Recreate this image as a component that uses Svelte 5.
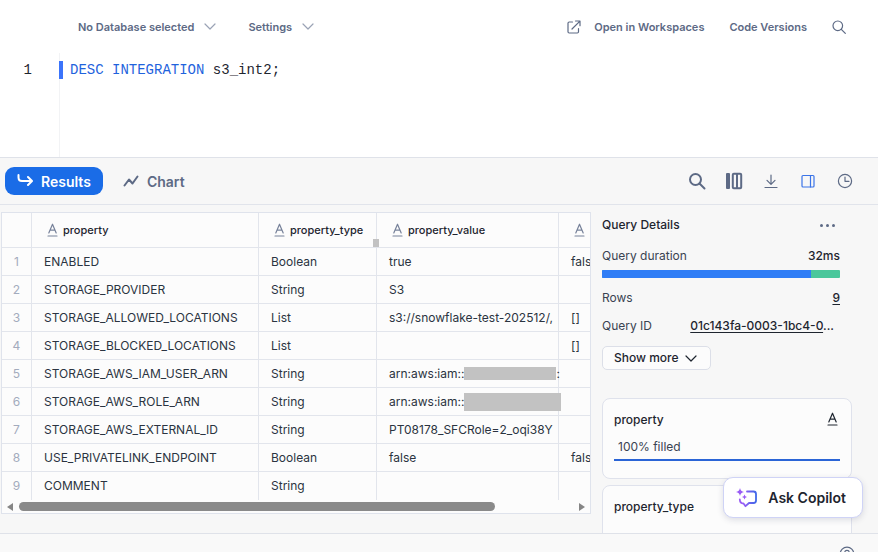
<script lang="ts">
  type Row = { property: string; type: string; value: string; fallback: string; mask?: string; tail?: string };

  const columns = ["property", "property_type", "property_value", ""];

  const rows: Row[] = [
    { property: "ENABLED", type: "Boolean", value: "true", fallback: "false" },
    { property: "STORAGE_PROVIDER", type: "String", value: "S3", fallback: "" },
    { property: "STORAGE_ALLOWED_LOCATIONS", type: "List", value: "s3://snowflake-test-202512/,", fallback: "[]" },
    { property: "STORAGE_BLOCKED_LOCATIONS", type: "List", value: "", fallback: "[]" },
    { property: "STORAGE_AWS_IAM_USER_ARN", type: "String", value: "arn:aws:iam::", fallback: "", mask: "short", tail: ":" },
    { property: "STORAGE_AWS_ROLE_ARN", type: "String", value: "arn:aws:iam::", fallback: "", mask: "tall" },
    { property: "STORAGE_AWS_EXTERNAL_ID", type: "String", value: "PT08178_SFCRole=2_oqi38Y", fallback: "" },
    { property: "USE_PRIVATELINK_ENDPOINT", type: "Boolean", value: "false", fallback: "false" },
    { property: "COMMENT", type: "String", value: "", fallback: "" },
  ];

  const compileShare = 88;

  let tab = $state("results");
</script>

{#snippet chevron()}
  <svg class="chevron" width="12" height="7" viewBox="0 0 12 7" aria-hidden="true">
    <path d="M1 1l5 5 5-5" />
  </svg>
{/snippet}

{#snippet textType()}
  <svg class="text-type" width="11" height="14" viewBox="0 0 11 14" aria-hidden="true">
    <path d="M1.8 10L5.5 1.2 9.2 10M3 7.2h5M1 13h9" />
  </svg>
{/snippet}

<div class="app">
  <header class="toolbar">
    <button class="menu" type="button">No Database selected {@render chevron()}</button>
    <button class="menu" type="button">Settings {@render chevron()}</button>
    <div class="actions">
      <button class="open" type="button">
        <svg class="icon" width="14" height="14" viewBox="0 0 14 14" aria-hidden="true">
          <path d="M5.5 2H2.2Q1 2 1 3.2v8.6Q1 13 2.2 13h8.1q1.2 0 1.2-1.2V8.5M5 9l7.7-7.7M8.5 1H13v4.7" />
        </svg>
        Open in Workspaces
      </button>
      <button type="button">Code Versions</button>
      <button class="find" type="button" aria-label="Search worksheet">
        <svg class="icon" width="14" height="14" viewBox="0 0 14 14" aria-hidden="true">
          <circle cx="5.8" cy="5.8" r="4.8" />
          <path d="M9.3 9.3L13.3 13.3" />
        </svg>
      </button>
    </div>
  </header>

  <section class="editor">
    <span class="line-no">1</span>
    <div class="code">
      <pre><span class="kw">DESC INTEGRATION</span> s3_int2;</pre>
    </div>
  </section>

  <nav class="tabs">
    <button class="tab" class:active={tab === "results"} type="button" onclick={() => (tab = "results")}>
      <svg class="tab-icon" width="16" height="14" viewBox="0 0 16 14" aria-hidden="true">
        <path d="M1.5 1v2.500Q1.500 7 5 7h9.500M11 3l4 4-4 4" />
      </svg>
      Results
    </button>
    <button class="tab" class:active={tab === "chart"} type="button" onclick={() => (tab = "chart")}>
      <svg class="tab-icon" width="16" height="14" viewBox="0 0 16 14" aria-hidden="true">
        <path d="M1.5 11.5l4.5-6 3.5 4 5-7" />
      </svg>
      Chart
    </button>
    <div class="tools">
      <button type="button" aria-label="Search results">
        <svg class="bold" width="18" height="18" viewBox="0 0 18 18" aria-hidden="true">
          <circle cx="7.5" cy="7.5" r="5.5" />
          <path d="M11.5 11.5l5 5" />
        </svg>
      </button>
      <button type="button" aria-label="Columns">
        <svg class="bold" width="18" height="18" viewBox="0 0 18 18" aria-hidden="true">
          <rect class="solid" x="1" y="1" width="4" height="16" rx="1" />
          <rect x="7.8" y="1.8" width="8.4" height="14.4" rx="1" />
          <path d="M12 2v14" />
        </svg>
      </button>
      <button type="button" aria-label="Download">
        <svg class="icon" width="18" height="18" viewBox="0 0 18 18" aria-hidden="true">
          <path d="M9 3v9M5 8.3l4 4 4-4M3 15.5h12" />
        </svg>
      </button>
      <button class="on" type="button" aria-label="Toggle details">
        <svg class="icon" width="18" height="18" viewBox="0 0 18 18" aria-hidden="true">
          <rect x="3" y="3.5" width="12" height="11.5" rx="1" />
          <path d="M11.5 3.5V15" />
        </svg>
      </button>
      <button type="button" aria-label="Query history">
        <svg class="icon" width="18" height="18" viewBox="0 0 18 18" aria-hidden="true">
          <circle cx="9" cy="9" r="6.6" />
          <path d="M9 5v4.3h4" />
        </svg>
      </button>
    </div>
  </nav>

  <main>
    <div class="grid">
      <table>
        <thead>
          <tr>
            <th class="num"></th>
            {#each columns as name, i (i)}
              <th class="c{i}">
                <span class="head">{@render textType()}{name}</span>
                {#if i === 1}<i class="resizer"></i>{/if}
              </th>
            {/each}
          </tr>
        </thead>
        <tbody>
          {#each rows as row, i (row.property)}
            <tr>
              <td class="num">{i + 1}</td>
              <td>{row.property}</td>
              <td>{row.type}</td>
              <td class:spill={row.mask}>
                {#if row.mask}
                  <span class="masked">{row.value}<i class="mask {row.mask}"></i>{row.tail ?? ""}</span>
                {:else}
                  {row.value}
                {/if}
              </td>
              <td>{row.fallback}</td>
            </tr>
          {/each}
        </tbody>
      </table>
      <div class="scrollbar" aria-hidden="true">
        <i class="arrow left"></i>
        <div class="track"><div class="thumb"></div></div>
        <i class="arrow right"></i>
      </div>
    </div>

    <aside>
      <div class="details">
        <div class="pair title">
          <h2>Query Details</h2>
          <button class="more" type="button" aria-label="More options"><i></i><i></i><i></i></button>
        </div>
        <div class="pair"><span>Query duration</span><span class="val">32ms</span></div>
        <div class="bar"><div class="compile" style="width: {compileShare}%"></div></div>
        <div class="pair"><span>Rows</span><a class="val" href="#rows">9</a></div>
        <div class="pair id">
          <span>Query ID</span>
          <span class="val"><a href="#query">01c143fa-0003-1bc4-0</a>...</span>
        </div>
        <button class="show" type="button">Show more {@render chevron()}</button>
      </div>

      <div class="card">
        <div class="card-head"><h3>property</h3>{@render textType()}</div>
        <p class="filled">100% filled</p>
      </div>
      <div class="card">
        <div class="card-head"><h3>property_type</h3></div>
      </div>
    </aside>
  </main>

  <footer>
    <button type="button" aria-label="Help">
      <svg class="icon" width="16" height="16" viewBox="0 0 16 16" aria-hidden="true">
        <circle cx="8" cy="8" r="6.8" />
        <path d="M5.8 6.4Q5.8 4.3 8 4.3t2.2 2.1Q10.2 7.4 9 8T8 9.5M8 11v1" />
      </svg>
    </button>
  </footer>

  <button class="copilot" type="button">
    <svg width="22" height="20" viewBox="0 0 22 20" aria-hidden="true">
      <defs>
        <linearGradient id="spark" x1="0" x2="1">
          <stop offset="0.2" stop-color="#9a5cf5" />
          <stop offset="1" stop-color="#3f68e8" />
        </linearGradient>
      </defs>
      <path class="bubble" d="M11 3.500h6.500q2.500 0 2.500 2.500V12.500q0 2.500-2.500 2.500H13l-3.500 3.200L7.500 15.500Q4 15.500 3.800 11.500" />
      <path class="star" d="M4 0q.6 3.400 4 4-3.400.6-4 4-.6-3.400-4-4 3.400-.6 4-4zM8.500 6.500q.4 2.100 2.500 2.500-2.100.4-2.500 2.500Q8.100 9.400 6 9q2.100-.4 2.500-2.500z" />
    </svg>
    Ask Copilot
  </button>
</div>

<style>
  :global(body) {
    background: #fff;
  }

  .app {
    position: relative;
    display: flex;
    flex-direction: column;
    height: 100vh;
    overflow: hidden;
    box-sizing: border-box;
    font-family: Inter, "Liberation Sans", sans-serif;
    font-size: 12px;
    color: #1e252f;
  }

  button {
    display: flex;
    align-items: center;
    padding: 0;
    border: 0;
    background: none;
    font: inherit;
    color: inherit;
    cursor: pointer;
    white-space: nowrap;
  }

  svg {
    display: block;
    flex: none;
    fill: none;
    stroke: currentColor;
    stroke-width: 1.2;
    stroke-linecap: round;
    stroke-linejoin: round;
  }

  h2,
  h3,
  p,
  pre {
    margin: 0;
  }

  .toolbar {
    display: flex;
    align-items: center;
    gap: 32px;
    height: 53px;
    padding: 0 32px 0 78px;
    font-size: 11px;
    font-weight: 600;
    color: #5d6a85;
  }

  .menu {
    gap: 10px;
  }

  .menu .chevron {
    color: #9aa3b5;
  }

  .actions {
    display: flex;
    align-items: center;
    gap: 25px;
    margin-left: auto;
  }

  .open {
    gap: 13px;
  }

  .editor {
    display: flex;
    height: 104px;
    font-family: "Liberation Mono", monospace;
    font-size: 14px;
    line-height: 18px;
  }

  .line-no {
    flex: none;
    width: 59px;
    padding: 8px 27px 0 0;
    text-align: right;
    box-sizing: border-box;
  }

  .code {
    flex: 1;
    padding-top: 8px;
    background: linear-gradient(#f2f3f5, #f2f3f5) no-repeat 0 0 / 1px 100%;
  }

  .code pre {
    padding-left: 7px;
    border-left: 4px solid #3b74fb;
    font: inherit;
  }

  .kw {
    color: #1f63dd;
  }

  .tabs {
    display: flex;
    align-items: center;
    gap: 8px;
    height: 46px;
    padding: 0 24px 0 5px;
    border-top: 1px solid #dfe2e9;
    border-bottom: 1px solid #e1e4eb;
    background: #f7f7f7;
  }

  .tab {
    gap: 8px;
    height: 28px;
    padding: 0 12px;
    border-radius: 9px;
    font-size: 14px;
    font-weight: 600;
    color: #5d6a85;
  }

  .tab.active {
    background: #1a6ce7;
    color: #fff;
  }

  .tab-icon {
    stroke-width: 2;
  }

  .tools {
    display: flex;
    gap: 19px;
    margin-left: auto;
    color: #5d6a85;
  }

  .bold {
    stroke-width: 2;
  }

  .bold .solid {
    fill: currentColor;
    stroke: none;
  }

  .tools .on {
    color: #3b74e8;
  }

  main {
    flex: 1;
    display: flex;
    gap: 11px;
    min-height: 0;
    padding: 7px 26px 0 1px;
    overflow: hidden;
    background: #f7f7f7;
  }

  .grid {
    flex: 1;
    min-width: 0;
    align-self: flex-start;
    overflow: hidden;
    border: 1px solid #dfe3ec;
    background: #fcfcfc;
  }

  table {
    width: 800px;
    table-layout: fixed;
    border-collapse: separate;
    border-spacing: 0;
  }

  th,
  td {
    height: 28px;
    padding: 0 0 0 12px;
    box-sizing: border-box;
    border-right: 1px solid #e2e5ec;
    border-bottom: 1px solid #e2e5ec;
    overflow: hidden;
    text-align: left;
    white-space: nowrap;
    line-height: 20px;
    color: #2b3441;
  }

  th {
    position: relative;
    height: 35px;
    padding-left: 15px;
    overflow: visible;
    font-size: 11px;
    font-weight: 500;
    color: #1e252f;
  }

  .spill {
    overflow: visible;
  }

  tbody tr:last-child td {
    border-bottom: 0;
  }

  .num {
    width: 30px;
    padding: 0;
    text-align: center;
    color: #a3abbd;
  }

  .c0 {
    width: 227px;
  }

  .c1 {
    width: 118px;
  }

  .c2 {
    width: 182px;
  }

  .head {
    display: flex;
    align-items: center;
    gap: 5px;
  }

  .head .text-type {
    color: #77829a;
  }

  .resizer {
    position: absolute;
    right: -3px;
    bottom: 0;
    width: 6px;
    height: 8px;
    background: #c2c2c2;
  }

  .masked {
    display: flex;
    align-items: center;
  }

  .mask {
    flex: none;
    width: 92px;
    height: 13px;
    background: #c2c2c2;
  }

  .mask.tall {
    width: 97px;
    height: 18px;
  }

  .scrollbar {
    display: flex;
    align-items: center;
    gap: 6px;
    height: 13px;
    padding: 0 5px;
  }

  .track {
    flex: 1;
  }

  .thumb {
    width: 86%;
    height: 9px;
    border-radius: 5px;
    background: #8a8a8a;
  }

  .arrow {
    border: 4px solid transparent;
  }

  .arrow.left {
    border-left: 0;
    border-right: 6px solid #858585;
  }

  .arrow.right {
    border-right: 0;
    border-left: 6px solid #858585;
  }

  aside {
    width: 250px;
    flex: none;
  }

  .details {
    padding-right: 12px;
    line-height: 20px;
  }

  .pair {
    display: flex;
    align-items: center;
    justify-content: space-between;
    height: 28px;
    color: #3a4352;
  }

  .title {
    height: 26px;
    margin-bottom: 4px;
  }

  h2,
  h3 {
    font-size: 12px;
    font-weight: 500;
    color: #1e252f;
  }

  .val,
  .val a {
    font-weight: 500;
    color: #1e252f;
  }

  a {
    text-underline-offset: 2px;
  }

  .pair.id .val {
    padding-right: 6px;
  }

  .more {
    gap: 3px;
    padding-right: 5px;
  }

  .more i {
    width: 3px;
    height: 3px;
    border-radius: 50%;
    background: #5d6a85;
  }

  .bar {
    height: 8px;
    margin-bottom: 6px;
    border-radius: 1px;
    overflow: hidden;
    background: #4ac79b;
  }

  .compile {
    height: 100%;
    background: #2f7df6;
  }

  .show {
    gap: 6px;
    height: 24px;
    margin-top: 6px;
    padding: 0 13px 0 11px;
    border: 1px solid #dcdfe8;
    border-radius: 5px;
    background: #fcfcfc;
    font-weight: 500;
  }

  .card {
    height: 81px;
    margin-top: 6px;
    padding: 10px 11px;
    box-sizing: border-box;
    border: 1px solid #dfe2ec;
    border-radius: 8px;
    background: #fcfcfc;
  }

  .details + .card {
    margin-top: 28px;
  }

  .card-head {
    display: flex;
    align-items: center;
    justify-content: space-between;
    height: 20px;
    padding-right: 2px;
  }

  .filled {
    padding: 8px 4px 2px;
    border-bottom: 2px solid #2a64d6;
    line-height: 20px;
    color: #3a4352;
  }

  footer {
    display: flex;
    justify-content: flex-end;
    height: 19px;
    padding: 12px 23px 0 0;
    box-sizing: border-box;
    border-top: 1px solid #dfe2e9;
    background: #f9f9f9;
    color: #5d6a85;
  }

  footer button {
    align-self: flex-start;
  }

  .copilot {
    position: absolute;
    right: 15px;
    bottom: 34px;
    gap: 10px;
    height: 41px;
    padding: 0 16px 0 12px;
    border: 1px solid #cfd3f6;
    border-radius: 10px;
    background: #fff;
    box-shadow: 0 2px 6px rgba(40, 50, 90, 0.15);
    font-size: 14px;
    font-weight: 600;
  }

  .bubble {
    stroke: url(#spark);
    stroke-width: 1.8;
  }

  .star {
    fill: #9a5cf5;
    stroke: none;
  }
</style>
